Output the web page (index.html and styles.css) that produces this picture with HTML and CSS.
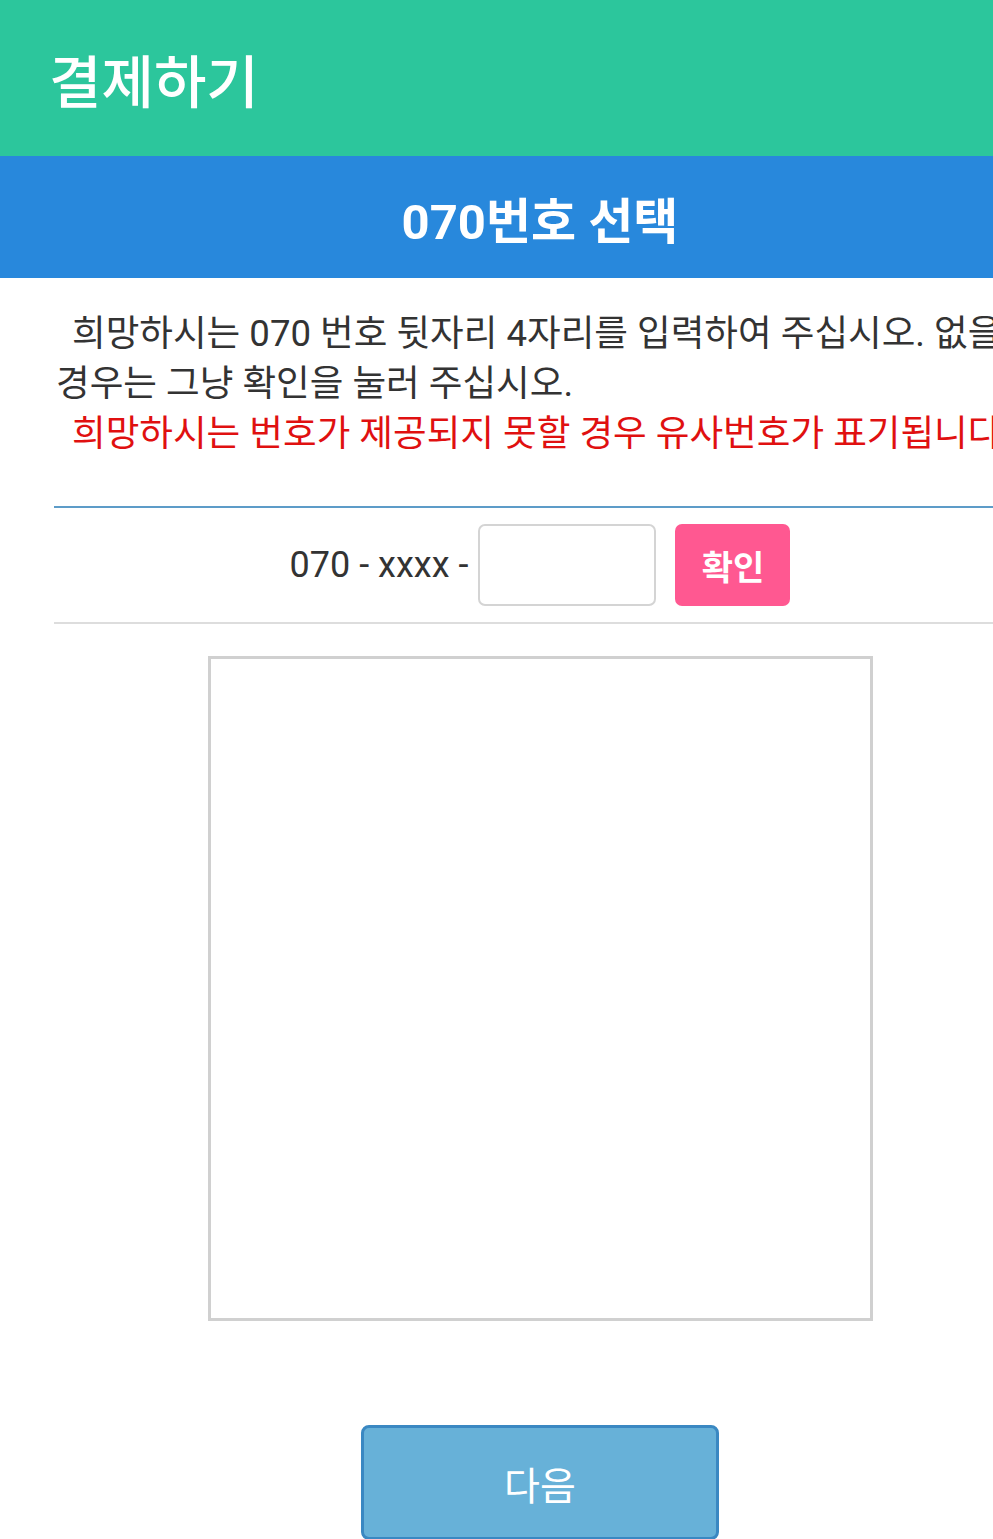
FILE: index.html
```html
<!DOCTYPE html>
<html lang="ko">
<head>
    <meta charset="UTF-8">
    <meta name="viewport" content="width=device-width, initial-scale=1.0">
    <title>결제하기</title>
    <link rel="stylesheet" href="styles.css">
</head>
<body>
    <div class="page">
        <header class="topbar">
            <h1>결제하기</h1>
        </header>
        <div class="subbar">070번호 선택</div>

        <div class="guide">
            <p class="desc">희망하시는 070 번호 뒷자리 4자리를 입력하여 주십시오. 없을 경우는 그냥 확인을 눌러 주십시오.</p>
            <p class="warn">희망하시는 번호가 제공되지 못할 경우 유사번호가 표기됩니다.</p>
        </div>

        <div class="number-row">
            <span class="prefix">070 - xxxx -</span>
            <input type="text" id="last4" maxlength="4">
            <button class="btn-check" onclick="checkNumber()">확인</button>
        </div>

        <div class="result-box" id="result"></div>

        <div class="bottom">
            <button class="btn-next">다음</button>
        </div>
    </div>

    <script>
        function checkNumber() {
            const v = document.getElementById('last4').value;
            document.getElementById('result').innerText = v;
        }
    </script>
</body>
</html>
```

FILE: styles.css
```css
html, body {
    margin: 0;
    padding: 0;
    overflow-x: hidden;
}
body {
    font-family: Roboto, "Noto Sans CJK KR", sans-serif;
    color: #333;
    background: #fff;
}
.page {
    width: 1080px;
}
.topbar {
    background-color: #2cc69c;
    height: 156px;
    display: flex;
    align-items: center;
    padding-left: 49px;
    box-sizing: border-box;
}
.topbar h1 {
    margin: 0;
    color: #fff;
    font-size: 57px;
    font-weight: 500;
}
.subbar {
    background-color: #2888dc;
    height: 122px;
    display: flex;
    align-items: center;
    justify-content: center;
    color: #fff;
    font-size: 49px;
    font-weight: 700;
}
.guide {
    padding: 31px 54px 0 56px;
    font-size: 36.6px;
    line-height: 50px;
}
.guide p {
    margin: 0;
    text-indent: 16px;
}
.warn {
    color: #e01010;
}
.number-row {
    margin: 47px 54px 0;
    border-top: 2px solid #5d9cc8;
    border-bottom: 2px solid #ddd;
    padding: 16px 0;
    display: flex;
    justify-content: center;
    align-items: center;
}
.prefix {
    font-size: 36px;
    margin-right: 10px;
}
.number-row input {
    width: 178px;
    height: 82px;
    box-sizing: border-box;
    border: 2px solid #d4d4d4;
    border-radius: 7px;
    font-size: 32px;
    padding: 0 10px;
}
.btn-check {
    margin-left: 19px;
    width: 115px;
    height: 82px;
    background-color: #ff5891;
    color: #fff;
    border: none;
    border-radius: 7px;
    font-family: inherit;
    font-size: 34px;
    font-weight: 700;
    cursor: pointer;
}
.result-box {
    width: 665px;
    height: 665px;
    box-sizing: border-box;
    margin: 32px auto 0;
    border: 3px solid #d0d0d0;
}
.bottom {
    display: flex;
    justify-content: center;
    padding-top: 104px;
}
.btn-next {
    width: 358px;
    height: 115px;
    background-color: #67b1d8;
    border: 3px solid #3a88c2;
    border-radius: 8px;
    color: #fff;
    font-family: inherit;
    font-size: 39px;
    cursor: pointer;
}
```
